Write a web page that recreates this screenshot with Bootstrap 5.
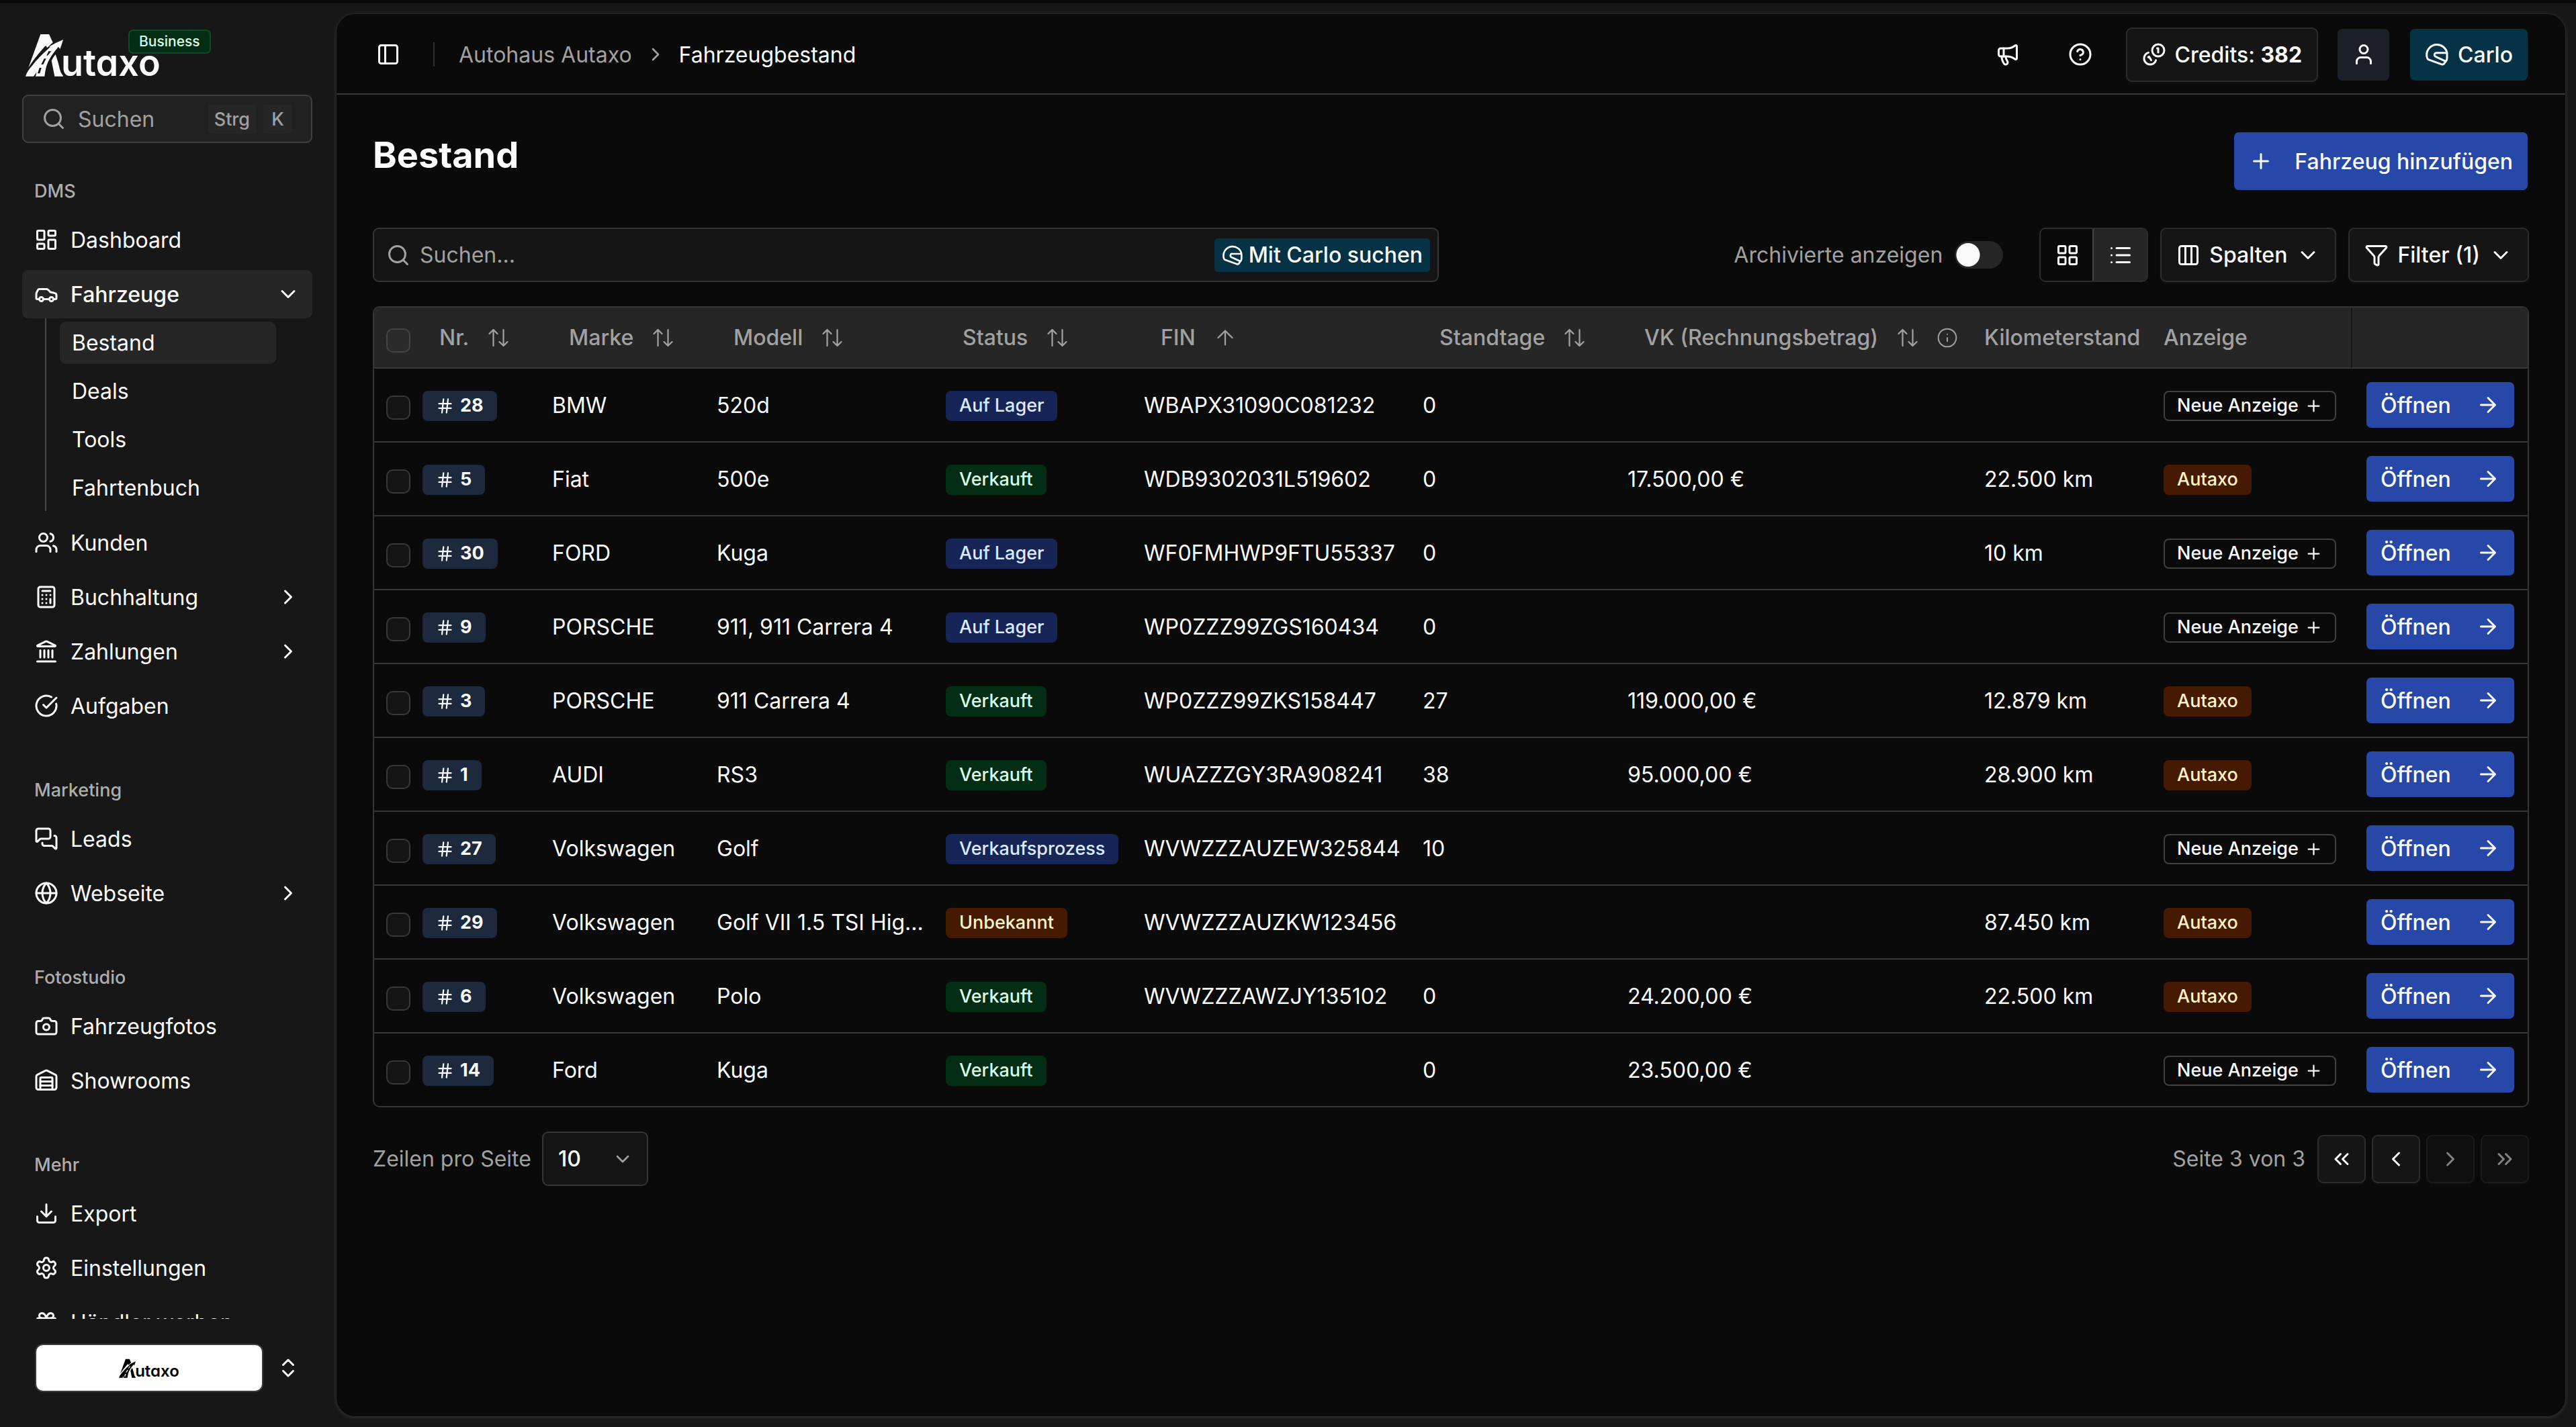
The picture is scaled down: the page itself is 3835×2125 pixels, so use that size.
<!DOCTYPE html>
<html lang="de" data-bs-theme="dark">
<head>
<meta charset="utf-8">
<meta name="viewport" content="width=device-width, initial-scale=1">
<title>Autaxo – Fahrzeugbestand</title>
<link href="https://cdn.jsdelivr.net/npm/bootstrap@5.3.0/dist/css/bootstrap.min.css" rel="stylesheet">
<style>
  :root { --ink: #fafafa; --dim: #a1a1a1; --line: #353535; --canvas: #0a0a0a; --side: #171717; --field: #151515; --blue: #2748a8; }
  html { font-size: 36px; }
  body { font-family: Inter, "Liberation Sans", sans-serif; font-size: 32px; line-height: 45px; color: var(--ink); background: var(--side); border-top: 5px solid var(--canvas); height: 100vh; overflow: hidden; }
  a { color: inherit; text-decoration: none; }
  button, input, select { font: inherit; color: inherit; }
  .ico { width: 36px; height: 36px; flex: none; fill: none; stroke: currentColor; stroke-width: 2; stroke-linecap: round; stroke-linejoin: round; }
  .ico-sm { width: 27px; height: 27px; }
  .ico-md { width: 32px; height: 32px; }
  .thin { stroke-width: 1.5; }
  .dim { color: var(--dim); }

  /* sidebar */
  .side { width: 501px; flex: none; }
  .brand { padding: 31px 36px 0 38px; height: 123px; }
  .brand-mark { width: 56px; height: 64px; fill: currentColor; }
  .brand-word { font-weight: 600; font-size: 54px; line-height: 54px; font-feature-settings: "cv11"; margin: 24px 0 0 -3px; }
  .plan { position: absolute; left: 191px; top: 39px; font-size: 21px; line-height: 32px; font-weight: 500; padding: 0 14px; color: #dcfce7; background: #032e15; border: 2px solid #0d4a28; border-radius: 7px; }
  .quick { margin: 13px 36px 0 33px; height: 72px; padding: 0 28px 0 27px; background: #212121; border: 2px solid #3f3f3f; border-radius: 9px; color: var(--dim); gap: 18px; }
  .keys { gap: 11px; }
  .keycap { font-family: inherit; font-size: 27px; line-height: 43px; font-weight: 500; padding: 0 9px; min-width: 43px; background: #262626; color: var(--dim); border-radius: 4px; text-align: center; }
  .side-scroll { flex: 1 1 0; min-height: 0; overflow: hidden; padding: 35px 36px 0 33px; }
  .side-group { margin-bottom: 53px; }
  .side-title { font-size: 27px; line-height: 73px; font-weight: 500; color: #adadad; padding-left: 18px; margin: 0; }
  .side-link { height: 72px; padding: 0 18px; gap: 18px; border-radius: 9px; }
  .side-link.active { background: #262626; font-weight: 500; }
  .side-list > li + li { margin-top: 9px; }
  .side-sub { margin-left: 34px; margin-right: 54px; padding: 5px 0 3px 20px; border-left: 2px solid #484848; }
  .side-list > li.after-sub { margin-top: 11px; }
  .side-sub li + li { margin-top: 9px; }
  .side-sub a { display: block; line-height: 63px; padding: 0 18px; border-radius: 9px; }
  .side-sub a.active { background: #262626; }
  .side-foot { padding: 37px 54px 52px 52px; gap: 19px; }
  .dealer { height: 72px; width: 340px; background: #fff; color: #000; border: 2px solid #3a3a3a; border-radius: 12px; }
  .dealer .brand-mark { width: 25px; height: 29px; }
  .dealer .brand-word { font-size: 24px; line-height: 24px; margin: 9px 0 0 -1px; }

  /* panel */
  .panel { margin: 16px 16px 16px 0; background: var(--canvas); border-radius: 27px; box-shadow: 0 1px 6px rgba(255,255,255,.16); min-width: 0; }
  .topbar { height: 120px; border-bottom: 2px solid var(--line); padding: 2px 54px 0 36px; gap: 27px; }
  .plain { width: 81px; height: 81px; padding: 0; border: 0; color: var(--ink); }
  .rule { width: 2px; height: 36px; background: #303030; }
  .crumbs { gap: 19px; margin-left: 9px; }
  .tool { height: 81px; padding: 0 22px; gap: 13px; border: 2px solid #2c2c2c; border-radius: 9px; background: var(--field); color: var(--ink); font-size: 32px; line-height: 45px; font-weight: 500; display: inline-flex; align-items: center; white-space: nowrap; box-shadow: 0 2px 4px rgba(255,255,255,.04); }
  .tool.solid { border-color: transparent; background-clip: padding-box; box-shadow: none; }
  .carlo { background-color: #053345; }
  .person { background-color: #1b2029; width: 81px; justify-content: center; }
  .blue { background-color: var(--blue); }
  .add { height: 90px; gap: 32px; }
  .content { padding: 54px 54px 0; }
  h1.title { font-size: 54px; line-height: 68px; font-weight: 700; padding-top: 2px; margin: 0; }
  .finder { width: 1587px; flex: 0 1 auto; height: 81px; padding: 0 11px 0 18px; gap: 14px; background: var(--field); border: 2px solid var(--line); border-radius: 9px; }
  .finder input { background: none; border: 0; outline: 0; min-width: 0; padding: 0; }
  .finder input::placeholder { color: var(--dim); opacity: 1; }
  .ask { height: 50px; padding: 0 11px; gap: 8px; border: 0; border-radius: 5px; font-size: 32px; line-height: 45px; font-weight: 500; color: var(--ink); white-space: nowrap; }
  .tools { margin: 54px 0 36px; gap: 18px; }
  .archive { gap: 18px; margin-right: 36px; }
  .archive input { appearance: none; width: 72px; height: 41px; margin: 0; border-radius: 21px; background: radial-gradient(circle at 20px 50%, var(--ink) 17px, transparent 18px) #262626; }
  .views { border: 2px solid #2c2c2c; border-radius: 9px; overflow: hidden; height: 81px; width: 162px; }
  .views button { flex: 1; border: 0; background: none; padding: 0; }
  .views button.active { background: #262626; box-shadow: 0 0 0 2px #444; }

  .frame { border: 2px solid var(--line); border-radius: 10px; overflow: hidden; }
  .stock { width: 100%; table-layout: fixed; border-collapse: separate; border-spacing: 0; }
  .stock th { height: 91px; padding: 0 0 0 18px; background: #262626; border-bottom: 2px solid #3a3a3a; color: var(--dim); font-weight: 500; white-space: nowrap; }
  .stock td { height: 110px; padding: 0 0 0 18px; border-bottom: 2px solid var(--line); white-space: nowrap; overflow: hidden; text-overflow: ellipsis; }
  .stock tr:last-child td { height: 108px; border-bottom: 0; }
  .stock td.act { padding: 0 18px 0 21px; }
  .stock th.act { border-left: 2px solid #171717; }
  .stock td.model { padding-right: 11px; }
  .sorter { border: 0; background: none; padding: 0 0 0 25px; gap: 26px; font-weight: 500; }
  .sorter + .ico { margin-left: 25px; }
  .c-box { width: 54px; } .c-nr { width: 193px; } .c-make { width: 245px; } .c-model { width: 341px; } .c-state { width: 295px; } .c-fin { width: 415px; } .c-days { width: 305px; } .c-price { width: 531px; } .c-km { width: 267px; } .c-ad { width: 297px; } .c-act { width: 263px; }
  .pick { appearance: none; display: block; width: 36px; height: 36px; margin: 8px 0 0; background: var(--field); border: 2px solid #383838; border-radius: 10px; }
  th .pick { background: #2b2b2b; border-color: #444; }
  .tag { display: inline-flex; align-items: center; gap: 9px; height: 45px; padding: 0 20px; border: 0; border-radius: 8px; font-size: 27px; line-height: 36px; font-weight: 500; vertical-align: middle; color: var(--ink); }
  .tag-nr { background: #1d293d; font-weight: 700; }
  .tag-lager { background: #162456; color: #dbeafe; }
  .tag-sold { background: #032e15; color: #dcfce7; }
  .tag-warn { background: #461901; color: #fef3c6; }
  .tag-new { background: none; border: 2px solid #404040; padding: 0 18px; }
  .open { height: 72px; width: 100%; justify-content: space-between; padding: 0 21px; }
  .pager { margin-top: 36px; }
  .rows { gap: 16px; }
  .rows select { width: 158px; height: 81px; padding: 0 22px; border: 2px solid var(--line); border-radius: 9px; background-color: var(--field); background-position: right 20px center; background-size: 32px 32px; font-size: 32px; font-weight: 500; color: var(--ink);
    background-image: url("data:image/svg+xml,%3csvg xmlns='http://www.w3.org/2000/svg' viewBox='0 0 24 24' fill='none' stroke='%23a1a1a1' stroke-width='2' stroke-linecap='round' stroke-linejoin='round'%3e%3cpath d='m6 9 6 6 6-6'/%3e%3c/svg%3e"); }
  .step { width: 72px; height: 72px; padding: 0; justify-content: center; }
  .step:disabled { opacity: .5; color: var(--ink); }
</style>
</head>
<body class="d-flex">

<svg class="d-none" xmlns="http://www.w3.org/2000/svg">
  <symbol id="i-search" viewBox="0 0 24 24"><circle cx="11" cy="11" r="8"/><path d="m21 21-4.3-4.3"/></symbol>
  <symbol id="i-dash" viewBox="0 0 24 24"><rect x="3" y="3" width="7" height="9" rx="1"/><rect x="14" y="3" width="7" height="5" rx="1"/><rect x="14" y="12" width="7" height="9" rx="1"/><rect x="3" y="16" width="7" height="5" rx="1"/></symbol>
  <symbol id="i-car" viewBox="0 0 24 24"><path d="M19 17h2c.6 0 1-.4 1-1v-3c0-.9-.7-1.7-1.5-1.9C18.7 10.6 16 10 16 10s-1.3-1.4-2.2-2.3c-.5-.4-1.1-.7-1.8-.7H5c-.6 0-1.1.4-1.4.9l-1.4 2.9A3.7 3.7 0 0 0 2 12v4c0 .6.4 1 1 1h2"/><circle cx="7" cy="17" r="2"/><path d="M9 17h6"/><circle cx="17" cy="17" r="2"/></symbol>
  <symbol id="i-users" viewBox="0 0 24 24"><path d="M16 21v-2a4 4 0 0 0-4-4H6a4 4 0 0 0-4 4v2"/><circle cx="9" cy="7" r="4"/><path d="M22 21v-2a4 4 0 0 0-3-3.87M16 3.13a4 4 0 0 1 0 7.75"/></symbol>
  <symbol id="i-calc" viewBox="0 0 24 24"><rect x="4" y="2" width="16" height="20" rx="2"/><path d="M8 6h8M16 14v4M16 10h.01M12 10h.01M8 10h.01M12 14h.01M8 14h.01M12 18h.01M8 18h.01"/></symbol>
  <symbol id="i-bank" viewBox="0 0 24 24"><path d="M10 18v-7M11.12 2.198a2 2 0 0 1 1.76.006l7.866 3.847c.476.233.31.949-.22.949H3.474c-.53 0-.695-.716-.22-.949zM14 18v-7M18 18v-7M3 22h18M6 18v-7"/></symbol>
  <symbol id="i-check" viewBox="0 0 24 24"><path d="M21.801 10A10 10 0 1 1 17 3.335"/><path d="m9 11 3 3L22 4"/></symbol>
  <symbol id="i-chat" viewBox="0 0 24 24"><path d="M16 10a2 2 0 0 1-2 2H6.828a2 2 0 0 0-1.414.586l-2.202 2.202A.71.71 0 0 1 2 14.286V4a2 2 0 0 1 2-2h10a2 2 0 0 1 2 2z"/><path d="M20 9a2 2 0 0 1 2 2v10.286a.71.71 0 0 1-1.212.502l-2.202-2.202A2 2 0 0 0 17.172 19H10a2 2 0 0 1-2-2v-1"/></symbol>
  <symbol id="i-globe" viewBox="0 0 24 24"><circle cx="12" cy="12" r="10"/><path d="M12 2a14.5 14.5 0 0 0 0 20 14.5 14.5 0 0 0 0-20M2 12h20"/></symbol>
  <symbol id="i-camera" viewBox="0 0 24 24"><path d="M13.997 4a2 2 0 0 1 1.76 1.05l.486.9A2 2 0 0 0 18.003 7H20a2 2 0 0 1 2 2v9a2 2 0 0 1-2 2H4a2 2 0 0 1-2-2V9a2 2 0 0 1 2-2h1.997a2 2 0 0 0 1.759-1.048l.489-.904A2 2 0 0 1 10.004 4z"/><circle cx="12" cy="13" r="3"/></symbol>
  <symbol id="i-ware" viewBox="0 0 24 24"><path d="M18 21V10a1 1 0 0 0-1-1H7a1 1 0 0 0-1 1v11"/><path d="M22 19a2 2 0 0 1-2 2H4a2 2 0 0 1-2-2V8a2 2 0 0 1 1.132-1.803l7.95-3.974a2 2 0 0 1 1.837 0l7.948 3.974A2 2 0 0 1 22 8zM6 13h12M6 17h12"/></symbol>
  <symbol id="i-down" viewBox="0 0 24 24"><path d="M12 15V3M21 15v4a2 2 0 0 1-2 2H5a2 2 0 0 1-2-2v-4M7 10l5 5 5-5"/></symbol>
  <symbol id="i-gear" viewBox="0 0 24 24"><path d="M9.671 4.136a2.34 2.34 0 0 1 4.659 0 2.34 2.34 0 0 0 3.319 1.915 2.34 2.34 0 0 1 2.33 4.033 2.34 2.34 0 0 0 0 3.831 2.34 2.34 0 0 1-2.33 4.033 2.34 2.34 0 0 0-3.319 1.915 2.34 2.34 0 0 1-4.659 0 2.34 2.34 0 0 0-3.32-1.915 2.34 2.34 0 0 1-2.33-4.033 2.34 2.34 0 0 0 0-3.831A2.34 2.34 0 0 1 6.35 6.051a2.34 2.34 0 0 0 3.319-1.915"/><circle cx="12" cy="12" r="3"/></symbol>
  <symbol id="i-gift" viewBox="0 0 24 24"><rect x="3" y="8" width="18" height="4" rx="1"/><path d="M12 8v13M19 12v7a2 2 0 0 1-2 2H7a2 2 0 0 1-2-2v-7M7.5 8a2.5 2.5 0 0 1 0-5A4.8 8 0 0 1 12 8a4.8 8 0 0 1 4.5-5 2.5 2.5 0 0 1 0 5"/></symbol>
  <symbol id="i-cdown" viewBox="0 0 24 24"><path d="m6 9 6 6 6-6"/></symbol>
  <symbol id="i-cright" viewBox="0 0 24 24"><path d="m9 18 6-6-6-6"/></symbol>
  <symbol id="i-cleft" viewBox="0 0 24 24"><path d="m15 18-6-6 6-6"/></symbol>
  <symbol id="i-first" viewBox="0 0 24 24"><path d="m11 17-5-5 5-5M18 17l-5-5 5-5"/></symbol>
  <symbol id="i-last" viewBox="0 0 24 24"><path d="m6 17 5-5-5-5M13 17l5-5-5-5"/></symbol>
  <symbol id="i-updown" viewBox="0 0 24 24"><path d="m7 15 5 5 5-5M7 9l5-5 5 5"/></symbol>
  <symbol id="i-panel" viewBox="0 0 24 24"><rect x="3" y="3" width="18" height="18" rx="2"/><path d="M9 3v18"/></symbol>
  <symbol id="i-mega" viewBox="0 0 24 24"><path d="M11 6a13 13 0 0 0 8.4-2.8A1 1 0 0 1 21 4v12a1 1 0 0 1-1.6.8A13 13 0 0 0 11 14H5a2 2 0 0 1-2-2V8a2 2 0 0 1 2-2z"/><path d="M6 14a12 12 0 0 0 2.4 7.2 2 2 0 0 0 3.2-2.4A8 8 0 0 1 10 14M8 6v8"/></symbol>
  <symbol id="i-help" viewBox="0 0 24 24"><circle cx="12" cy="12" r="10"/><path d="M9.09 9a3 3 0 0 1 5.83 1c0 2-3 3-3 3M12 17h.01"/></symbol>
  <symbol id="i-coins" viewBox="0 0 24 24"><path d="M13.744 17.736a6 6 0 1 1-7.48-7.48M15 6h1v4M6.134 14.768l.866-.5 2 3.464"/><circle cx="16" cy="8" r="6"/></symbol>
  <symbol id="i-user" viewBox="0 0 24 24"><path d="M19 21v-2a4 4 0 0 0-4-4H9a4 4 0 0 0-4 4v2"/><circle cx="12" cy="7" r="4"/></symbol>
  <symbol id="i-helmet" viewBox="0 0 24 24"><path d="M22 10.500A10.200 10.200 0 0 0 1.800 12.500Q1.900 16.600 3.800 17.300L16.800 21.900Q18.200 22.400 19 21.300L21.200 18.400Q22 17.200 22 15.500V10.500H12a2 2 0 0 0-.9 3.900L20.400 18.800"/></symbol>
  <symbol id="i-plus" viewBox="0 0 24 24"><path d="M5 12h14M12 5v14"/></symbol>
  <symbol id="i-grid" viewBox="0 0 24 24"><rect x="3" y="3" width="7" height="7" rx="1"/><rect x="14" y="3" width="7" height="7" rx="1"/><rect x="14" y="14" width="7" height="7" rx="1"/><rect x="3" y="14" width="7" height="7" rx="1"/></symbol>
  <symbol id="i-list" viewBox="0 0 24 24"><path d="M3 12h.01M3 19h.01M3 5h.01M8 12h13M8 19h13M8 5h13"/></symbol>
  <symbol id="i-cols" viewBox="0 0 24 24"><rect x="3" y="3" width="18" height="18" rx="2"/><path d="M9 3v18M15 3v18"/></symbol>
  <symbol id="i-funnel" viewBox="0 0 24 24"><path d="M10 20a1 1 0 0 0 .553.895l2 1A1 1 0 0 0 14 21v-7a2 2 0 0 1 .517-1.341L21.740 4.670A1 1 0 0 0 21 3H3a1 1 0 0 0-.742 1.670l7.225 7.989A2 2 0 0 1 10 14z"/></symbol>
  <symbol id="i-sort" viewBox="0 0 24 24"><path d="m21 16-4 4-4-4M17 20V4M3 8l4-4 4 4M7 4v16"/></symbol>
  <symbol id="i-up" viewBox="0 0 24 24"><path d="m5 12 7-7 7 7M12 19V5"/></symbol>
  <symbol id="i-info" viewBox="0 0 24 24"><circle cx="12" cy="12" r="10"/><path d="M12 16v-4M12 8h.01"/></symbol>
  <symbol id="i-arrow" viewBox="0 0 24 24"><path d="M5 12h14M12 5l7 7-7 7"/></symbol>
  <symbol id="i-hash" viewBox="0 0 24 24"><path d="M4 9h16M4 15h16M10 3 8 21M16 3l-2 18"/></symbol>
  <symbol id="i-road" viewBox="114 150 168 192">
    <path d="M181 153H218Q221 155 222 159L236 190 210 214 206 204 200 208Q152 262 127 302Z"/>
    <path fill-rule="evenodd" d="M114 341Q121 318 141 296 175 253 227 208L216 210Q250 190 282 177 276 199 268 219L261 209Q229 246 215 276 203 302 199 341H159L164 322 150 341ZM217 229L208 248 213 248 229 229ZM197 262L184 288 193 288 206 262ZM176 303L168 328 178 328 185 303Z"/>
    <path d="M230 271Q238 254 248 243 262 283 266 306 270 326 284 341H244Z"/>
  </symbol>
</svg>

<aside class="side d-flex flex-column position-relative">
  <a class="brand d-flex align-items-center" href="#" aria-label="Autaxo">
    <svg class="brand-mark"><use href="#i-road"/></svg><span class="brand-word">utaxo</span>
  </a>
  <span class="plan">Business</span>
  <button class="quick d-flex align-items-center text-start" type="button">
    <svg class="ico"><use href="#i-search"/></svg><span class="flex-grow-1">Suchen</span>
    <span class="keys d-flex"><kbd class="keycap">Strg</kbd><kbd class="keycap">K</kbd></span>
  </button>

  <nav class="side-scroll">
    <section class="side-group">
      <h2 class="side-title">DMS</h2>
      <ul class="side-list list-unstyled m-0">
        <li><a class="side-link d-flex align-items-center" href="#"><svg class="ico"><use href="#i-dash"/></svg>Dashboard</a></li>
        <li>
          <a class="side-link active d-flex align-items-center" href="#"><svg class="ico"><use href="#i-car"/></svg>Fahrzeuge<svg class="ico ms-auto"><use href="#i-cdown"/></svg></a>
          <ul class="side-sub list-unstyled mb-0">
            <li><a class="active" href="#">Bestand</a></li>
            <li><a href="#">Deals</a></li>
            <li><a href="#">Tools</a></li>
            <li><a href="#">Fahrtenbuch</a></li>
          </ul>
        </li>
        <li class="after-sub"><a class="side-link d-flex align-items-center" href="#"><svg class="ico"><use href="#i-users"/></svg>Kunden</a></li>
        <li><a class="side-link d-flex align-items-center" href="#"><svg class="ico"><use href="#i-calc"/></svg>Buchhaltung<svg class="ico ms-auto"><use href="#i-cright"/></svg></a></li>
        <li><a class="side-link d-flex align-items-center" href="#"><svg class="ico"><use href="#i-bank"/></svg>Zahlungen<svg class="ico ms-auto"><use href="#i-cright"/></svg></a></li>
        <li><a class="side-link d-flex align-items-center" href="#"><svg class="ico"><use href="#i-check"/></svg>Aufgaben</a></li>
      </ul>
    </section>
    <section class="side-group">
      <h2 class="side-title">Marketing</h2>
      <ul class="side-list list-unstyled m-0">
        <li><a class="side-link d-flex align-items-center" href="#"><svg class="ico"><use href="#i-chat"/></svg>Leads</a></li>
        <li><a class="side-link d-flex align-items-center" href="#"><svg class="ico"><use href="#i-globe"/></svg>Webseite<svg class="ico ms-auto"><use href="#i-cright"/></svg></a></li>
      </ul>
    </section>
    <section class="side-group">
      <h2 class="side-title">Fotostudio</h2>
      <ul class="side-list list-unstyled m-0">
        <li><a class="side-link d-flex align-items-center" href="#"><svg class="ico"><use href="#i-camera"/></svg>Fahrzeugfotos</a></li>
        <li><a class="side-link d-flex align-items-center" href="#"><svg class="ico"><use href="#i-ware"/></svg>Showrooms</a></li>
      </ul>
    </section>
    <section class="side-group">
      <h2 class="side-title">Mehr</h2>
      <ul class="side-list list-unstyled m-0">
        <li><a class="side-link d-flex align-items-center" href="#"><svg class="ico"><use href="#i-down"/></svg>Export</a></li>
        <li><a class="side-link d-flex align-items-center" href="#"><svg class="ico"><use href="#i-gear"/></svg>Einstellungen</a></li>
        <li><a class="side-link d-flex align-items-center" href="#"><svg class="ico"><use href="#i-gift"/></svg>Händler werben</a></li>
      </ul>
    </section>
  </nav>

  <div class="side-foot d-flex align-items-center">
    <button class="dealer d-flex align-items-center justify-content-center p-0" type="button" aria-label="Autaxo">
      <svg class="brand-mark"><use href="#i-road"/></svg><span class="brand-word">utaxo</span>
    </button>
    <svg class="ico"><use href="#i-updown"/></svg>
  </div>
</aside>

<main class="panel flex-grow-1">
  <header class="topbar d-flex align-items-center">
    <button class="plain btn d-flex align-items-center justify-content-center" type="button" aria-label="Seitenleiste"><svg class="ico"><use href="#i-panel"/></svg></button>
    <span class="rule"></span>
    <nav class="crumbs d-flex align-items-center" aria-label="Breadcrumb">
      <a class="dim" href="#">Autohaus Autaxo</a>
      <svg class="ico ico-md dim"><use href="#i-cright"/></svg>
      <span>Fahrzeugbestand</span>
    </nav>
    <button class="plain btn ms-auto d-flex align-items-center justify-content-center" type="button" aria-label="Neuigkeiten"><svg class="ico"><use href="#i-mega"/></svg></button>
    <button class="plain btn d-flex align-items-center justify-content-center" type="button" aria-label="Hilfe"><svg class="ico"><use href="#i-help"/></svg></button>
    <button class="tool" type="button"><svg class="ico"><use href="#i-coins"/></svg><span>Credits: <b>382</b></span></button>
    <button class="tool solid person" type="button" aria-label="Profil"><svg class="ico"><use href="#i-user"/></svg></button>
    <button class="tool solid carlo" type="button"><svg class="ico"><use href="#i-helmet"/></svg>Carlo</button>
  </header>

  <div class="content">
    <div class="d-flex justify-content-between align-items-start">
      <h1 class="title">Bestand</h1>
      <button class="tool solid blue add" type="button"><svg class="ico"><use href="#i-plus"/></svg>Fahrzeug hinzufügen</button>
    </div>

    <div class="tools d-flex align-items-center">
      <div class="finder d-flex align-items-center me-auto">
        <svg class="ico dim"><use href="#i-search"/></svg>
        <input class="flex-grow-1" type="text" placeholder="Suchen..." aria-label="Suchen">
        <button class="ask carlo d-flex align-items-center" type="button"><svg class="ico ico-md"><use href="#i-helmet"/></svg>Mit Carlo suchen</button>
      </div>
      <div class="archive d-flex align-items-center">
        <label class="dim" for="archived">Archivierte anzeigen</label>
        <input id="archived" type="checkbox" role="switch">
      </div>
      <div class="views d-flex" role="group" aria-label="Ansicht">
        <button class="d-flex align-items-center justify-content-center" type="button" aria-label="Kacheln"><svg class="ico"><use href="#i-grid"/></svg></button>
        <button class="active d-flex align-items-center justify-content-center" type="button" aria-label="Liste"><svg class="ico"><use href="#i-list"/></svg></button>
      </div>
      <button class="tool" type="button"><svg class="ico"><use href="#i-cols"/></svg>Spalten<svg class="ico"><use href="#i-cdown"/></svg></button>
      <button class="tool" type="button"><svg class="ico"><use href="#i-funnel"/></svg>Filter (1)<svg class="ico"><use href="#i-cdown"/></svg></button>
    </div>

    <div class="frame">
      <table class="stock">
        <colgroup><col class="c-box"><col class="c-nr"><col class="c-make"><col class="c-model"><col class="c-state"><col class="c-fin"><col class="c-days"><col class="c-price"><col class="c-km"><col class="c-ad"><col class="c-act"></colgroup>
        <thead>
          <tr>
            <th><input class="pick" type="checkbox" aria-label="Alle auswählen"></th>
            <th><button class="sorter d-flex align-items-center" type="button">Nr.<svg class="ico thin"><use href="#i-sort"/></svg></button></th>
            <th><button class="sorter d-flex align-items-center" type="button">Marke<svg class="ico thin"><use href="#i-sort"/></svg></button></th>
            <th><button class="sorter d-flex align-items-center" type="button">Modell<svg class="ico thin"><use href="#i-sort"/></svg></button></th>
            <th><button class="sorter d-flex align-items-center" type="button">Status<svg class="ico thin"><use href="#i-sort"/></svg></button></th>
            <th><button class="sorter d-flex align-items-center" type="button">FIN<svg class="ico thin"><use href="#i-up"/></svg></button></th>
            <th><button class="sorter d-flex align-items-center" type="button">Standtage<svg class="ico thin"><use href="#i-sort"/></svg></button></th>
            <th><div class="d-flex align-items-center"><button class="sorter d-flex align-items-center" type="button">VK (Rechnungsbetrag)<svg class="ico thin"><use href="#i-sort"/></svg></button><svg class="ico ico-md thin"><use href="#i-info"/></svg></div></th>
            <th>Kilometerstand</th>
            <th>Anzeige</th>
            <th class="act"></th>
          </tr>
        </thead>
        <tbody id="stock-rows"></tbody>
      </table>
    </div>

    <div class="pager d-flex align-items-center justify-content-between">
      <div class="rows d-flex align-items-center">
        <label class="dim" for="per-page">Zeilen pro Seite</label>
        <select class="form-select" id="per-page"><option>10</option><option>20</option><option>50</option></select>
      </div>
      <div class="d-flex align-items-center gap-1">
        <span class="dim me-1">Seite 3 von 3</span>
        <button class="tool step" type="button" aria-label="Erste Seite"><svg class="ico"><use href="#i-first"/></svg></button>
        <button class="tool step" type="button" aria-label="Vorherige Seite"><svg class="ico"><use href="#i-cleft"/></svg></button>
        <button class="tool step" type="button" aria-label="Nächste Seite" disabled><svg class="ico"><use href="#i-cright"/></svg></button>
        <button class="tool step" type="button" aria-label="Letzte Seite" disabled><svg class="ico"><use href="#i-last"/></svg></button>
      </div>
    </div>
  </div>
</main>

<script>
  // nr, make, model, state, VIN, days in stock, price, mileage, advertised
  const cars = [
    [28, "BMW", "520d", "Auf Lager", "WBAPX31090C081232", "0", "", "", false],
    [5, "Fiat", "500e", "Verkauft", "WDB9302031L519602", "0", "17.500,00 €", "22.500 km", true],
    [30, "FORD", "Kuga", "Auf Lager", "WF0FMHWP9FTU55337", "0", "", "10 km", false],
    [9, "PORSCHE", "911, 911 Carrera 4", "Auf Lager", "WP0ZZZ99ZGS160434", "0", "", "", false],
    [3, "PORSCHE", "911 Carrera 4", "Verkauft", "WP0ZZZ99ZKS158447", "27", "119.000,00 €", "12.879 km", true],
    [1, "AUDI", "RS3", "Verkauft", "WUAZZZGY3RA908241", "38", "95.000,00 €", "28.900 km", true],
    [27, "Volkswagen", "Golf", "Verkaufsprozess", "WVWZZZAUZEW325844", "10", "", "", false],
    [29, "Volkswagen", "Golf VII 1.5 TSI Hig...", "Unbekannt", "WVWZZZAUZKW123456", "", "", "87.450 km", true],
    [6, "Volkswagen", "Polo", "Verkauft", "WVWZZZAWZJY135102", "0", "24.200,00 €", "22.500 km", true],
    [14, "Ford", "Kuga", "Verkauft", "", "0", "23.500,00 €", "", false]
  ];
  const tone = { "Auf Lager": "tag-lager", "Verkaufsprozess": "tag-lager", "Verkauft": "tag-sold", "Unbekannt": "tag-warn" };
  document.getElementById("stock-rows").innerHTML = cars.map(([nr, make, model, state, vin, days, price, km, ad]) => `
    <tr>
      <td><input class="pick" type="checkbox" aria-label="Fahrzeug ${nr} auswählen"></td>
      <td><span class="tag tag-nr"><svg class="ico ico-sm"><use href="#i-hash"/></svg>${nr}</span></td>
      <td>${make}</td>
      <td class="model">${model}</td>
      <td><span class="tag ${tone[state]}">${state}</span></td>
      <td>${vin}</td><td>${days}</td><td>${price}</td><td>${km}</td>
      <td>${ad ? '<span class="tag tag-warn">Autaxo</span>' : '<button class="tag tag-new" type="button">Neue Anzeige<svg class="ico ico-sm"><use href="#i-plus"/></svg></button>'}</td>
      <td class="act"><button class="tool solid blue open" type="button">Öffnen<svg class="ico"><use href="#i-arrow"/></svg></button></td>
    </tr>`).join("");
</script>
<script src="https://cdn.jsdelivr.net/npm/bootstrap@5.3.0/dist/js/bootstrap.bundle.min.js"></script>
</body>
</html>
